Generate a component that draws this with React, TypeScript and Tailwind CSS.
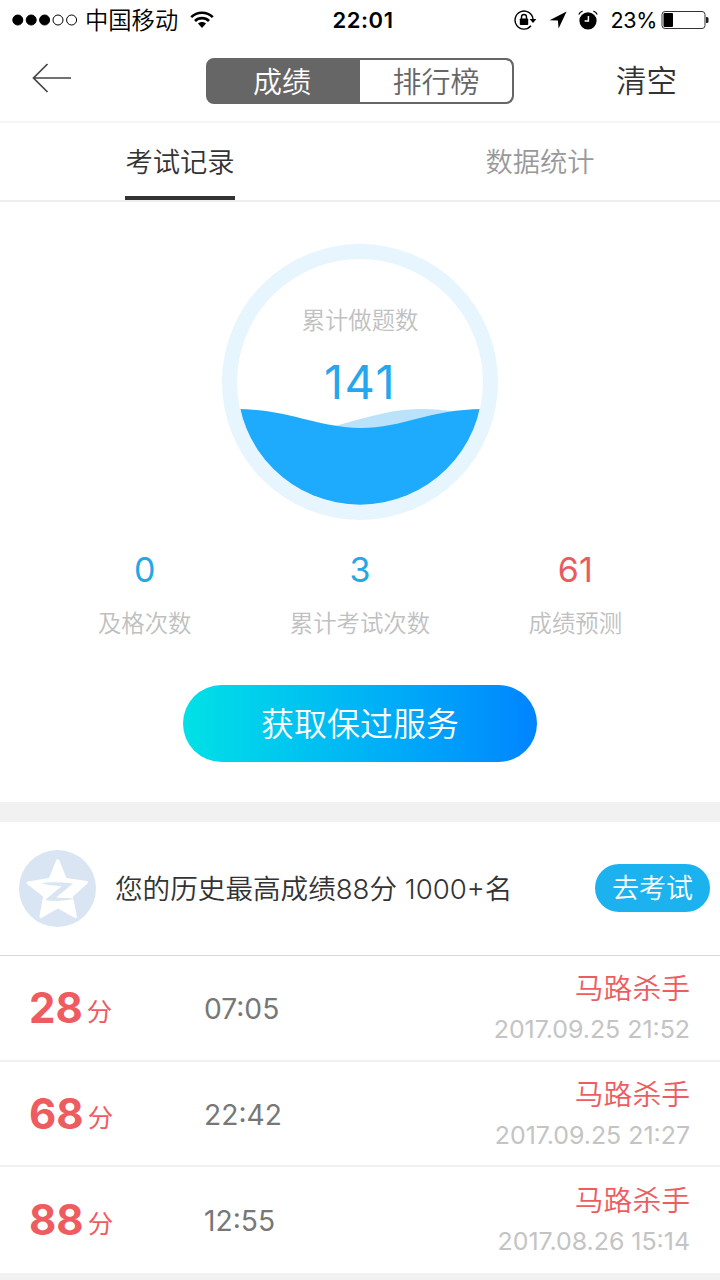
import classNames from 'clsx'

type ExamRecord = {
    score: number,
    duration: string,
    title: string,
    date: string
}

const records: ExamRecord[] = [
    { score: 28, duration: '07:05', title: '马路杀手', date: '2017.09.25 21:52' },
    { score: 68, duration: '22:42', title: '马路杀手', date: '2017.09.25 21:27' },
    { score: 88, duration: '12:55', title: '马路杀手', date: '2017.08.26 15:14' },
]

const stats = [
    { value: '0', label: '及格次数', danger: false },
    { value: '3', label: '累计考试次数', danger: false },
    { value: '61', label: '成绩预测', danger: true },
]

function StatusBar() {
    return (
        <div className="flex h-10 items-center justify-between pl-3 pr-[11px] text-black">
            <div className="flex w-[320px] items-center">
                <svg width="66" height="12" viewBox="0 0 66 12" fill="none" stroke="#000">
                    <circle cx="5.8" cy="6" r="5" fill="#000" />
                    <circle cx="19.2" cy="6" r="5" fill="#000" />
                    <circle cx="32.6" cy="6" r="5" fill="#000" />
                    <circle cx="46" cy="6" r="5" />
                    <circle cx="59.6" cy="6" r="5" />
                </svg>
                <span className="ml-[7px] pt-0.5 text-[23.3px] font-[350] leading-[38px]">中国移动</span>
                <svg className="ml-3" width="24" height="18" viewBox="0 0 24 18" fill="none" stroke="#000" strokeWidth="2.6">
                    <path d="M1.2 6.2C7.2 .2 16.8 .2 22.8 6.2" />
                    <path d="M5 10C8.9 6.2 15.1 6.2 19 10" />
                    <path d="M8 12.6C10.2 10.6 13.8 10.6 16 12.6L12 17Z" fill="#000" stroke="none" />
                </svg>
            </div>
            <span className="ml-[5px] text-[22px] font-semibold leading-10 tracking-[0.6px]">22:01</span>
            <div className="flex w-[320px] items-center justify-end">
                <svg width="23" height="20" viewBox="0 0 23 20" fill="none" stroke="#000" strokeWidth="1.4">
                    <path d="M17 15.8A9 9 0 1 1 19 9.2" />
                    <path d="M15.6 9H22.4L19 13Z" fill="#000" stroke="none" />
                    <rect x="5.8" y="8.5" width="8.4" height="6.5" rx=".8" fill="#000" stroke="none" />
                    <path d="M7.5 9V7a2.5 2.5 0 0 1 5 0V9" />
                </svg>
                <svg className="ml-3" width="18" height="18" viewBox="0 0 18 18">
                    <path d="M17.6 .4L9.6 17.4L8.9 9.6L.6 9.2Z" />
                </svg>
                <svg className="ml-[11px]" width="20" height="20" viewBox="0 0 20 20" fill="none" stroke="#000">
                    <circle cx="10" cy="10.8" r="8.6" fill="#000" stroke="none" />
                    <path d="M.8 4.6A6 6 0 0 1 4.6 1.2M19.2 4.6A6 6 0 0 0 15.4 1.2" strokeWidth="1.3" />
                    <path d="M10.4 6V11H6.6" stroke="#fff" strokeWidth="1.5" />
                </svg>
                <span className="ml-3 text-[21.5px] leading-10 tracking-[-0.3px]">23%</span>
                <svg className="ml-1" width="48" height="20" viewBox="0 0 48 20" fill="none">
                    <rect x="1" y="1.5" width="43" height="17" rx="3" stroke="#333" />
                    <rect x="2.5" y="3" width="9.5" height="14" rx="1" fill="#000" />
                    <path d="M45 7h1a1.5 1.5 0 0 1 1.5 1.5v3A1.5 1.5 0 0 1 46 13h-1Z" fill="#222" />
                </svg>
            </div>
        </div>
    )
}

function Header() {
    return (
        <div className="flex h-[83px] items-center justify-between border-b-2 border-[#f5f5f5] pl-8 pr-[43px]">
            <svg className="-mt-1.5" width="40" height="30" viewBox="0 0 40 30" fill="none" stroke="#444" strokeWidth="1.7">
                <path d="M15.5 1L1.5 15L15.5 29M1.5 15H39" />
            </svg>
            <div className="mt-px ml-8 flex h-[46px] w-[308px] overflow-hidden rounded-lg border-2 border-[#666] bg-[#666] text-[29px] font-[350] leading-[45px]">
                <div className="w-1/2 pr-1 text-center text-white">成绩</div>
                <div className="w-1/2 rounded-r-md bg-white text-center text-[#666]">排行榜</div>
            </div>
            <span className="mt-px text-[30.5px] font-[350] leading-10 text-[#333]">清空</span>
        </div>
    )
}

function Tabs() {
    return (
        <div className="flex h-[79px] border-b-2 border-[#eee] text-[27.3px] font-[350] leading-[79px]">
            <div className="flex flex-1 justify-center text-[#333]">
                <div className="h-[77px] w-[110px] border-b-4 border-[#333] text-center">考试记录</div>
            </div>
            <div className="flex-1 text-center text-[#999]">数据统计</div>
        </div>
    )
}

function Gauge() {
    return (
        <div className="relative mx-auto h-[276px] w-[276px]">
            <svg width="276" height="276" viewBox="0 0 276 276">
                <defs>
                    <clipPath id="inner">
                        <circle cx="138" cy="138" r="122.7" />
                    </clipPath>
                </defs>
                <circle cx="138" cy="138" r="130.5" fill="none" stroke="#e6f5fe" strokeWidth="15" />
                <g clipPath="url(#inner)">
                    <path d="M66 192C120 184 155 165 200 165C225 165 240 169 262 174V200H66Z" fill="#bae3fb" />
                    <path d="M14 165C65 165 98 184 138 184C182 184 208 165 262 165V276H14Z" fill="#1eaafd" />
                </g>
            </svg>
            <div className="absolute inset-x-0 top-[60px] text-center">
                <div className="text-[23.3px] font-[350] leading-[34px] text-[#c0c0c0]">累计做题数</div>
                <div className="mt-4 text-[47px] leading-[56px] tracking-[1.5px] text-[#24a7ee]">141</div>
            </div>
        </div>
    )
}

function RecordRow({ record, last }: { record: ExamRecord, last: boolean }) {
    return (
        <div className={classNames('flex h-[105.5px] items-center pl-[29px] pr-[30px]', !last && 'border-b-2 border-[#f0f0f0]')}>
            <div className="w-[175px] pt-px text-[#ee5c60]">
                <span className="text-[42px] font-bold leading-[60px]">{record.score}</span>
                <span className="relative -top-0.5 ml-1 text-[25.5px]">分</span>
            </div>
            <div className="flex-1 pt-[3px] text-[28.2px] text-[#777]">{record.duration}</div>
            <div className="pt-0.5 text-right">
                <div className="text-[28.8px] font-[350] leading-[42px] text-[#ee5c60]">{record.title}</div>
                <div className="-mt-px text-[24.9px] leading-10 text-[#c4c4c4]">{record.date}</div>
            </div>
        </div>
    )
}

function App() {
    return (
        <div className="h-[1280px] w-[720px] overflow-hidden bg-[#f1f1f1] font-['Inter','Noto_Sans_CJK_SC',sans-serif]">
            <div className="h-[802px] bg-white">
                <StatusBar />
                <Header />
                <Tabs />
                <div className="pt-[42px]">
                    <Gauge />
                    <div className="mt-[26px] grid grid-cols-3 px-[37px] text-center">
                        {stats.map((item) => (
                            <div key={item.label}>
                                <div className={classNames('text-[34px] leading-[48px]', item.danger ? 'text-[#ea5b60]' : 'text-[#24a7e6]')}>{item.value}</div>
                                <div className="mt-[13px] text-[23.4px] font-[350] leading-[34px] text-[#c0c0c0]">{item.label}</div>
                            </div>
                        ))}
                    </div>
                    <div className="mx-auto mt-11 h-[77px] w-[354px] rounded-full bg-linear-to-r from-[#00e1e6] to-[#0084ff] text-center text-[33px] font-[350] leading-[79px] text-white">
                        获取保过服务
                    </div>
                </div>
            </div>

            <div className="mt-5 flex h-[134px] items-center border-b border-[#d8d8d8] bg-white pl-[19px] pr-2.5">
                <svg width="77" height="77" viewBox="0 0 77 77">
                    <circle cx="38.5" cy="38.5" r="38.5" fill="#d9e5f2" />
                    <path d="M38.5 9Q40 9 41 12L47.5 28L68 31Q70 32 68 34L54 46.5L58 67Q57 69 55 67.5L39 58.5L23 67.5Q20 69 20.5 66L24 46.5L8 34Q7 32 9 31.5L30 28L36.5 12Q37.5 9 38.5 9Z" fill="#fff" />
                    <path d="M22 33Q38 31.5 54 33.5L37 47.5Q47 48.5 58 48Q43 52.5 26 50L43 36Q32 36.5 22 33Z" fill="#d9e5f2" />
                </svg>
                <span className="ml-[19px] flex-1 whitespace-nowrap pt-[3px] text-[27.6px] font-[350] text-[#333]">您的历史最高成绩88分 1000+名</span>
                <div className="-mt-px h-12 w-[115px] rounded-full bg-[#1bb2ef] text-center text-[27px] font-[350] leading-[50px] text-white">去考试</div>
            </div>

            <div className="bg-white">
                {records.map((record, i) => (
                    <RecordRow key={record.date} record={record} last={i === records.length - 1} />
                ))}
            </div>
        </div>
    )
}

export default App
